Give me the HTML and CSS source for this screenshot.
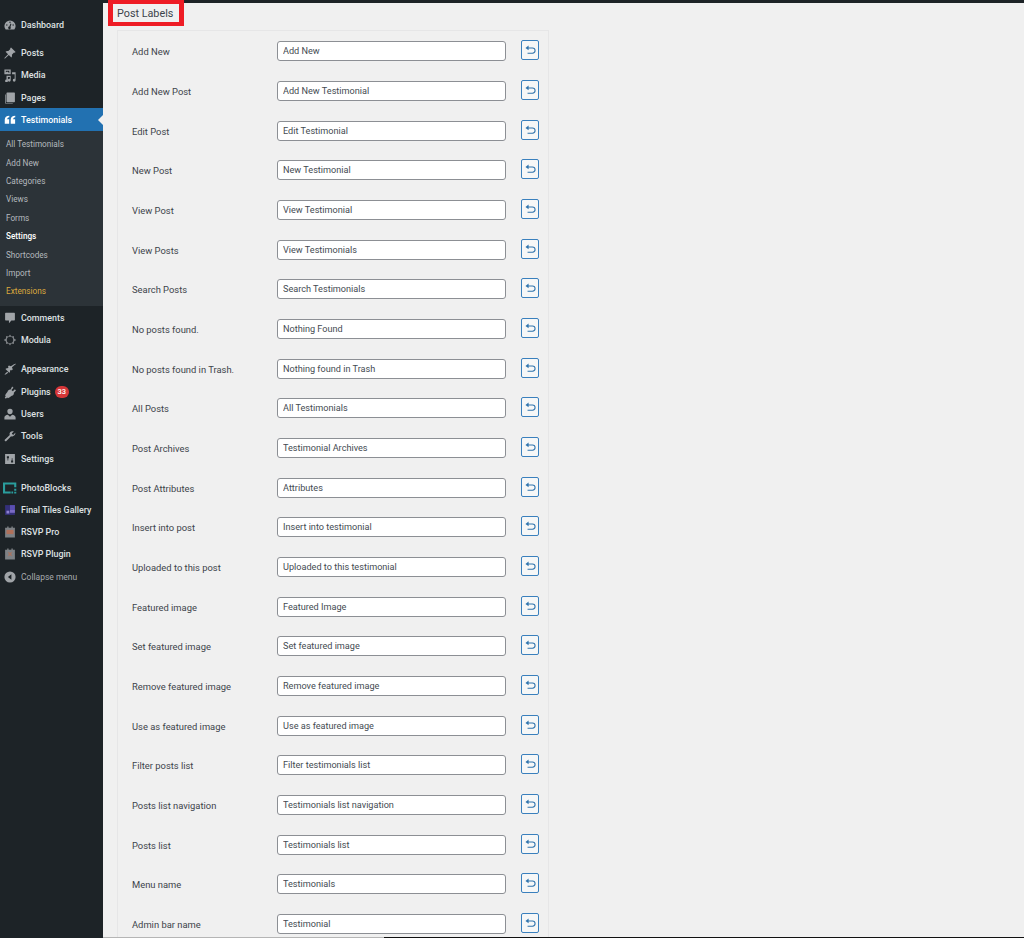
FILE: index.html
```html
<!DOCTYPE html>
<html lang="en">
<head>
<meta charset="utf-8">
<title>Post Labels</title>
<link rel="stylesheet" href="styles.css">
</head>
<body>
<svg class="defs" width="0" height="0"><symbol id="undo" viewBox="0 0 20 20"><path d="M8 3.500 3.500 7 8 10.500V7.800h5.500a3 3 0 0 1 0 6H6.500v1.500h7a4.500 4.500 0 0 0 0-9H8z"/></symbol></svg>
<div class="topbar"></div>
<div class="layout">
<nav class="side">
  <ul class="menu m-first">
    <li class="item"><svg class="ic" viewBox="0 0 20 20"><path d="M3.800 16.500A8 8 0 1 1 16.200 16.500H3.800zM10 5a1 1 0 1 0 0 2 1 1 0 0 0 0-2zM5.500 9a1 1 0 1 0 0 2 1 1 0 0 0 0-2zM14.500 9a1 1 0 1 0 0 2 1 1 0 0 0 0-2zM10.800 8 9 12.200a1.800 1.800 0 1 0 1.600.6L12 8.500z" fill-rule="evenodd"/></svg><span>Dashboard</span></li>
  </ul>
  <ul class="menu m-posts">
    <li class="item"><svg class="ic" viewBox="0 0 20 20"><path d="M11.500 2 18 8.500 16.700 9.800l-1-.4-3 3c.4 1.500.1 3-.8 4L8.300 12.800 3 18l-1 0 0-1 5.200-5.300L3.600 8.100c1-.9 2.500-1.200 4-.8l3-3-.4-1z"/></svg><span>Posts</span></li>
    <li class="item"><svg class="ic" viewBox="0 0 20 20"><path d="M2 2h9v7H2zM4 4v2.500l2-1.500 3 2V4zM13 6h5v11.500a2 2 0 1 1-2-2h.7V9H13zM5 11h6v6.500a2 2 0 1 1-2-2h.8V13H7v5.500a2 2 0 1 1-2-2z" fill-rule="evenodd"/></svg><span>Media</span></li>
    <li class="item"><svg class="ic" viewBox="0 0 20 20"><path d="M6 2h10a1 1 0 0 1 1 1v12a1 1 0 0 1-1 1H6a1 1 0 0 1-1-1V3a1 1 0 0 1 1-1zM3 5v12.500a.5.5 0 0 0 .5.5H14v-1H4V5z"/></svg><span>Pages</span></li>
    <li class="item current"><svg class="ic" viewBox="0 0 20 20"><path d="M9 4v2C6.800 6.500 6 7.500 6 9h2.800v6.500H2.500V9.500C2.500 6 5 4 9 4zM17.500 4v2C15.300 6.500 14.500 7.500 14.500 9h2.800v6.500H11V9.500C11 6 13.500 4 17.500 4z"/></svg><span>Testimonials</span></li>
  </ul>
  <ul class="submenu">
    <li>All Testimonials</li>
    <li>Add New</li>
    <li>Categories</li>
    <li>Views</li>
    <li>Forms</li>
    <li class="on">Settings</li>
    <li>Shortcodes</li>
    <li>Import</li>
    <li class="ext">Extensions</li>
  </ul>
  <ul class="menu">
    <li class="item"><svg class="ic" viewBox="0 0 20 20"><path d="M4 2.500h12a1 1 0 0 1 1 1v9a1 1 0 0 1-1 1h-4l-3.500 4v-4H4a1 1 0 0 1-1-1v-9a1 1 0 0 1 1-1z"/></svg><span>Comments</span></li>
    <li class="item"><svg class="ic ic-dim" viewBox="0 0 20 20"><path d="M10 2l2 3 3.500-.8.300 3.500L19 10l-3.200 2.300-.3 3.500-3.500-.8-2 3-2-3-3.500.8-.3-3.500L1 10l3.200-2.300.3-3.500L8 5zM10 5.500a4.500 4.500 0 1 0 0 9 4.500 4.500 0 0 0 0-9z" fill-rule="evenodd"/></svg><span>Modula</span></li>
  </ul>
  <ul class="menu m-gap">
    <li class="item"><svg class="ic" viewBox="0 0 20 20"><path d="M18.500 2.500c-.7-.7-4.500 1.500-7.500 3.700L8.500 5 7 6.500l1 1-1.500 1.500c-1.200-.3-2.500.1-3 1L9 15.500c.9-.5 1.300-1.800 1-3l1.500-1.500 1 1L14 10.500l-1.200-2.500c2.200-3 6.400-5 5.700-5.500zM6 14l-4 4h2l3.500-2.500z"/></svg><span>Appearance</span></li>
    <li class="item"><svg class="ic" viewBox="0 0 20 20"><path d="M13 2l2 2-3 3 2 2 3-3 1.500 2-3 3c.5 2-1 4-3 4.500L9 18l-2 1-1-1-2 1.500-1.500-1.500L4 16l-1-1 1-2 2.500-3.500C7 7.500 9 6 11 6.500z"/></svg><span>Plugins</span><b class="badge">33</b></li>
    <li class="item"><svg class="ic" viewBox="0 0 20 20"><path d="M10 2.500a3.800 3.800 0 0 1 3.800 4c0 2.200-1.500 4-3.800 4s-3.800-1.800-3.800-4a3.800 3.800 0 0 1 3.800-4zM7 11l3 3 3-3c3 .3 5 2 5 4v3H2v-3c0-2 2-3.700 5-4z"/></svg><span>Users</span></li>
    <li class="item"><svg class="ic" viewBox="0 0 20 20"><path d="M17.500 5.500l-3 3-2-2 3-3c-2-.9-4.200-.3-5.300 1.200-.9 1.200-1 2.600-.5 3.800L2.500 15.500a1.500 1.500 0 0 0 2 2l7-7.200c1.200.5 2.600.4 3.800-.5 1.500-1.100 2.900-2.800 2.200-4.800z"/></svg><span>Tools</span></li>
    <li class="item"><svg class="ic" viewBox="0 0 20 20"><path d="M3 3h14v14H3zM5.500 6v3h1v3h1V9h1V6zM12.500 9v3h-1v3h3v-3h-1V9z" fill-rule="evenodd"/></svg><span>Settings</span></li>
  </ul>
  <ul class="menu m-gap">
    <li class="item"><svg class="ic" viewBox="0 0 20 20"><path class="teal" d="M0 2h19v7h-3V5H3v10h8v3H0z"/><path class="teal" d="M12 15h2.500v3H12zM16 11h3v3h-3zM16 15.500h3V18h-3z"/></svg><span>PhotoBlocks</span></li>
    <li class="item"><svg class="ic" viewBox="0 0 20 20"><path class="pur-a" d="M3 3h14v14H3z"/><path class="pur-b" d="M10 3h7v7h-7z"/><path class="pur-c" d="M10 10h7v4h-7z"/><path class="pur-d" d="M5 11h4v4H5z"/></svg><span>Final Tiles Gallery</span></li>
    <li class="item"><svg class="ic ic-dim" viewBox="0 0 20 20"><path d="M6 2h2v2h4V2h2v2h3v14H3V4h3z"/><path class="rsvp" d="M5 7h10v6H5z"/></svg><span>RSVP Pro</span></li>
    <li class="item"><svg class="ic ic-dim" viewBox="0 0 20 20"><path d="M6 2h2v2h4V2h2v2h3v14H3V4h3z"/><path class="rsvp" d="M8 7l2 2 2-2 1 1-2 2 2 2-1 1-2-2-2 2-1-1 2-2-2-2z"/></svg><span>RSVP Plugin</span></li>
    <li class="item collapse"><svg class="ic" viewBox="0 0 20 20"><path d="M10 2a8 8 0 1 0 0 16 8 8 0 0 0 0-16zM12 6v8L7 10z" fill-rule="evenodd"/></svg><span>Collapse menu</span></li>
  </ul>
</nav>
<main class="main">
  <div class="title-wrap"><h2 class="title">Post Labels</h2></div>
  <section class="panel">
    <div class="row"><label>Add New</label><input value="Add New"><button><svg><use href="#undo"/></svg></button></div>
    <div class="row"><label>Add New Post</label><input value="Add New Testimonial"><button><svg><use href="#undo"/></svg></button></div>
    <div class="row"><label>Edit Post</label><input value="Edit Testimonial"><button><svg><use href="#undo"/></svg></button></div>
    <div class="row"><label>New Post</label><input value="New Testimonial"><button><svg><use href="#undo"/></svg></button></div>
    <div class="row"><label>View Post</label><input value="View Testimonial"><button><svg><use href="#undo"/></svg></button></div>
    <div class="row"><label>View Posts</label><input value="View Testimonials"><button><svg><use href="#undo"/></svg></button></div>
    <div class="row"><label>Search Posts</label><input value="Search Testimonials"><button><svg><use href="#undo"/></svg></button></div>
    <div class="row"><label>No posts found.</label><input value="Nothing Found"><button><svg><use href="#undo"/></svg></button></div>
    <div class="row"><label>No posts found in Trash.</label><input value="Nothing found in Trash"><button><svg><use href="#undo"/></svg></button></div>
    <div class="row"><label>All Posts</label><input value="All Testimonials"><button><svg><use href="#undo"/></svg></button></div>
    <div class="row"><label>Post Archives</label><input value="Testimonial Archives"><button><svg><use href="#undo"/></svg></button></div>
    <div class="row"><label>Post Attributes</label><input value="Attributes"><button><svg><use href="#undo"/></svg></button></div>
    <div class="row"><label>Insert into post</label><input value="Insert into testimonial"><button><svg><use href="#undo"/></svg></button></div>
    <div class="row"><label>Uploaded to this post</label><input value="Uploaded to this testimonial"><button><svg><use href="#undo"/></svg></button></div>
    <div class="row"><label>Featured image</label><input value="Featured Image"><button><svg><use href="#undo"/></svg></button></div>
    <div class="row"><label>Set featured image</label><input value="Set featured image"><button><svg><use href="#undo"/></svg></button></div>
    <div class="row"><label>Remove featured image</label><input value="Remove featured image"><button><svg><use href="#undo"/></svg></button></div>
    <div class="row"><label>Use as featured image</label><input value="Use as featured image"><button><svg><use href="#undo"/></svg></button></div>
    <div class="row"><label>Filter posts list</label><input value="Filter testimonials list"><button><svg><use href="#undo"/></svg></button></div>
    <div class="row"><label>Posts list navigation</label><input value="Testimonials list navigation"><button><svg><use href="#undo"/></svg></button></div>
    <div class="row"><label>Posts list</label><input value="Testimonials list"><button><svg><use href="#undo"/></svg></button></div>
    <div class="row"><label>Menu name</label><input value="Testimonials"><button><svg><use href="#undo"/></svg></button></div>
    <div class="row"><label>Admin bar name</label><input value="Testimonial"><button><svg><use href="#undo"/></svg></button></div>
  </section>
</main>
</div>
<div class="foot-line"><div class="foot-grey"></div><div class="foot-black"></div></div>
</body>
</html>
```
FILE: styles.css
```css
* { box-sizing: border-box; }
html, body { margin: 0; padding: 0; height: 938px; overflow: hidden; }
body { background: #f0f0f0; font-family: Roboto, "Open Sans", sans-serif; color: #3c434a; display: flex; flex-direction: column; }
.defs { position: absolute; }
.topbar { height: 3px; background: #1d2327; flex: none; }
.layout { display: flex; flex: 1; min-height: 0; }
.side { width: 103px; flex: none; background: #1d2327; color: #f0f0f1; font-size: 8.9px; }
.menu, .submenu { list-style: none; margin: 0; padding: 0; }
.item { height: 22.3px; padding-top: 1.2px; display: flex; align-items: center; position: relative; font-weight: 500; color: #dfe1e3; }
.item span { margin-left: 4px; white-space: nowrap; }
.ic { width: 14px; height: 14px; fill: #a0a4a8; flex: none; margin-left: 3px; }
.ic-dim { fill: #7d8185; }
.teal { fill: #2a9d9d; }
.pur-a { fill: #34307a; }
.pur-b { fill: #5a4fb0; }
.pur-c { fill: #7a6bc4; }
.pur-d { fill: #8c80d0; }
.rsvp { fill: #b0705a; }
.m-first { margin-top: 10px; }
.m-posts { margin-top: 6px; }
.m-gap { margin-top: 6.8px; }
.current { background: #2271b1; color: #fff; height: 23px; }
.current .ic { fill: #fff; }
.current::after { content: ""; position: absolute; right: 0; top: 7px; border: 5px solid transparent; border-right-color: #f0f0f0; border-left: 0; }
.submenu { background: #2c3338; padding: 4px 0 0; height: 175px; font-size: 8.2px; }
.submenu li { height: 18.4px; line-height: 18.4px; padding-left: 6px; color: #b4b9be; white-space: nowrap; }
.submenu .on { color: #fff; font-weight: 500; }
.submenu .ext { color: #dba93d; }
.badge { margin-left: 4px; width: 14px; height: 12px; border-radius: 7px; background: #d63638; color: #fff; font-size: 7.5px; font-weight: 500; display: flex; align-items: center; justify-content: center; }
.collapse { color: #a7aaad; font-weight: 400; font-size: 8.5px; }
.main { flex: 1; min-width: 0; padding-left: 5px; }
.title-wrap { height: 26px; width: 76px; margin-top: -3px; border-style: solid; border-color: #ee1c25; border-width: 4px 5px; display: flex; align-items: center; position: relative; }
.title { margin: 0 0 0 4px; font-size: 10.8px; font-weight: 400; color: #3c434a; white-space: nowrap; }
.panel { width: 432px; margin: 4px 0 0 9px; padding: 0.6px 9px 0 14px; border: 1px solid #e6e6e7; border-bottom: 0; }
.row { height: 39.66px; display: flex; align-items: center; }
.row label { width: 145px; flex: none; font-size: 9.4px; color: #3c434a; white-space: nowrap; position: relative; top: 0.5px; }
.row input { width: 229px; height: 20px; flex: none; border: 1px solid #8c8f94; border-radius: 3px; background: #fff; padding: 0 5px; font: 9.15px Roboto, "Open Sans", sans-serif; color: #444b52; }
.row button { width: 18px; height: 20px; flex: none; margin: -2px 0 0 15px; padding: 0; border: 1px solid #3a80bd; border-radius: 2px; background: #f6f7f7; display: flex; align-items: center; justify-content: center; }
.row button svg { width: 14px; height: 14px; fill: #2f74ad; }
.foot-line { height: 1px; flex: none; display: flex; background: #1d2327; padding-left: 103px; }
.foot-grey { width: 281px; background: #b5b5b5; }
.foot-black { flex: 1; background: #111; }
```
